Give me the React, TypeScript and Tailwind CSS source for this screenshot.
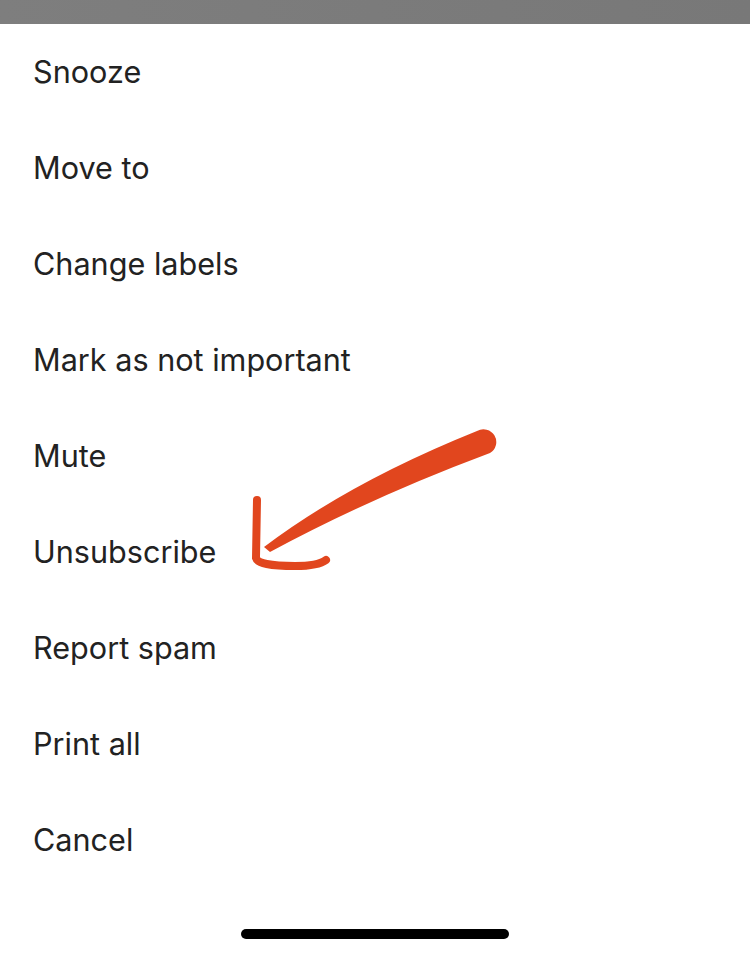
import React from 'react';

const ACTIONS = [
  'Snooze',
  'Move to',
  'Change labels',
  'Mark as not important',
  'Mute',
  'Unsubscribe',
  'Report spam',
  'Print all',
  'Cancel',
];

const ScribbleArrow: React.FC = () => (
  <svg
    className="pointer-events-none absolute left-0 top-0"
    width={750}
    height={956}
    viewBox="0 0 750 956"
  >
    <path
      d="M264 547 Q350 482 477 431 A12 12 0 0 1 490 453 Q372 497 270 552 Z"
      fill="#e1461e"
    />
    <path
      d="M257 500 L256 558 Q258 566 295 566 Q318 566 326 560"
      fill="none"
      stroke="#e1461e"
      strokeWidth={8}
      strokeLinecap="round"
      strokeLinejoin="round"
    />
  </svg>
);

const App: React.FC = () => {
  return (
    <div className="relative h-[956px] w-[750px] overflow-hidden bg-white font-['Inter',sans-serif]">
      <div className="h-[24px] bg-gradient-to-r from-[#7e7e7e] to-[#787878]" />
      <ul>
        {ACTIONS.map(action => (
          <li key={action} className="flex h-[96px] items-center px-[33px] text-[30.6px] text-[#222222]">
            {action}
          </li>
        ))}
      </ul>
      <div className="absolute bottom-[17px] left-[241px] h-[10px] w-[268px] rounded-full bg-black" />
      <ScribbleArrow />
    </div>
  );
};

export default App;
